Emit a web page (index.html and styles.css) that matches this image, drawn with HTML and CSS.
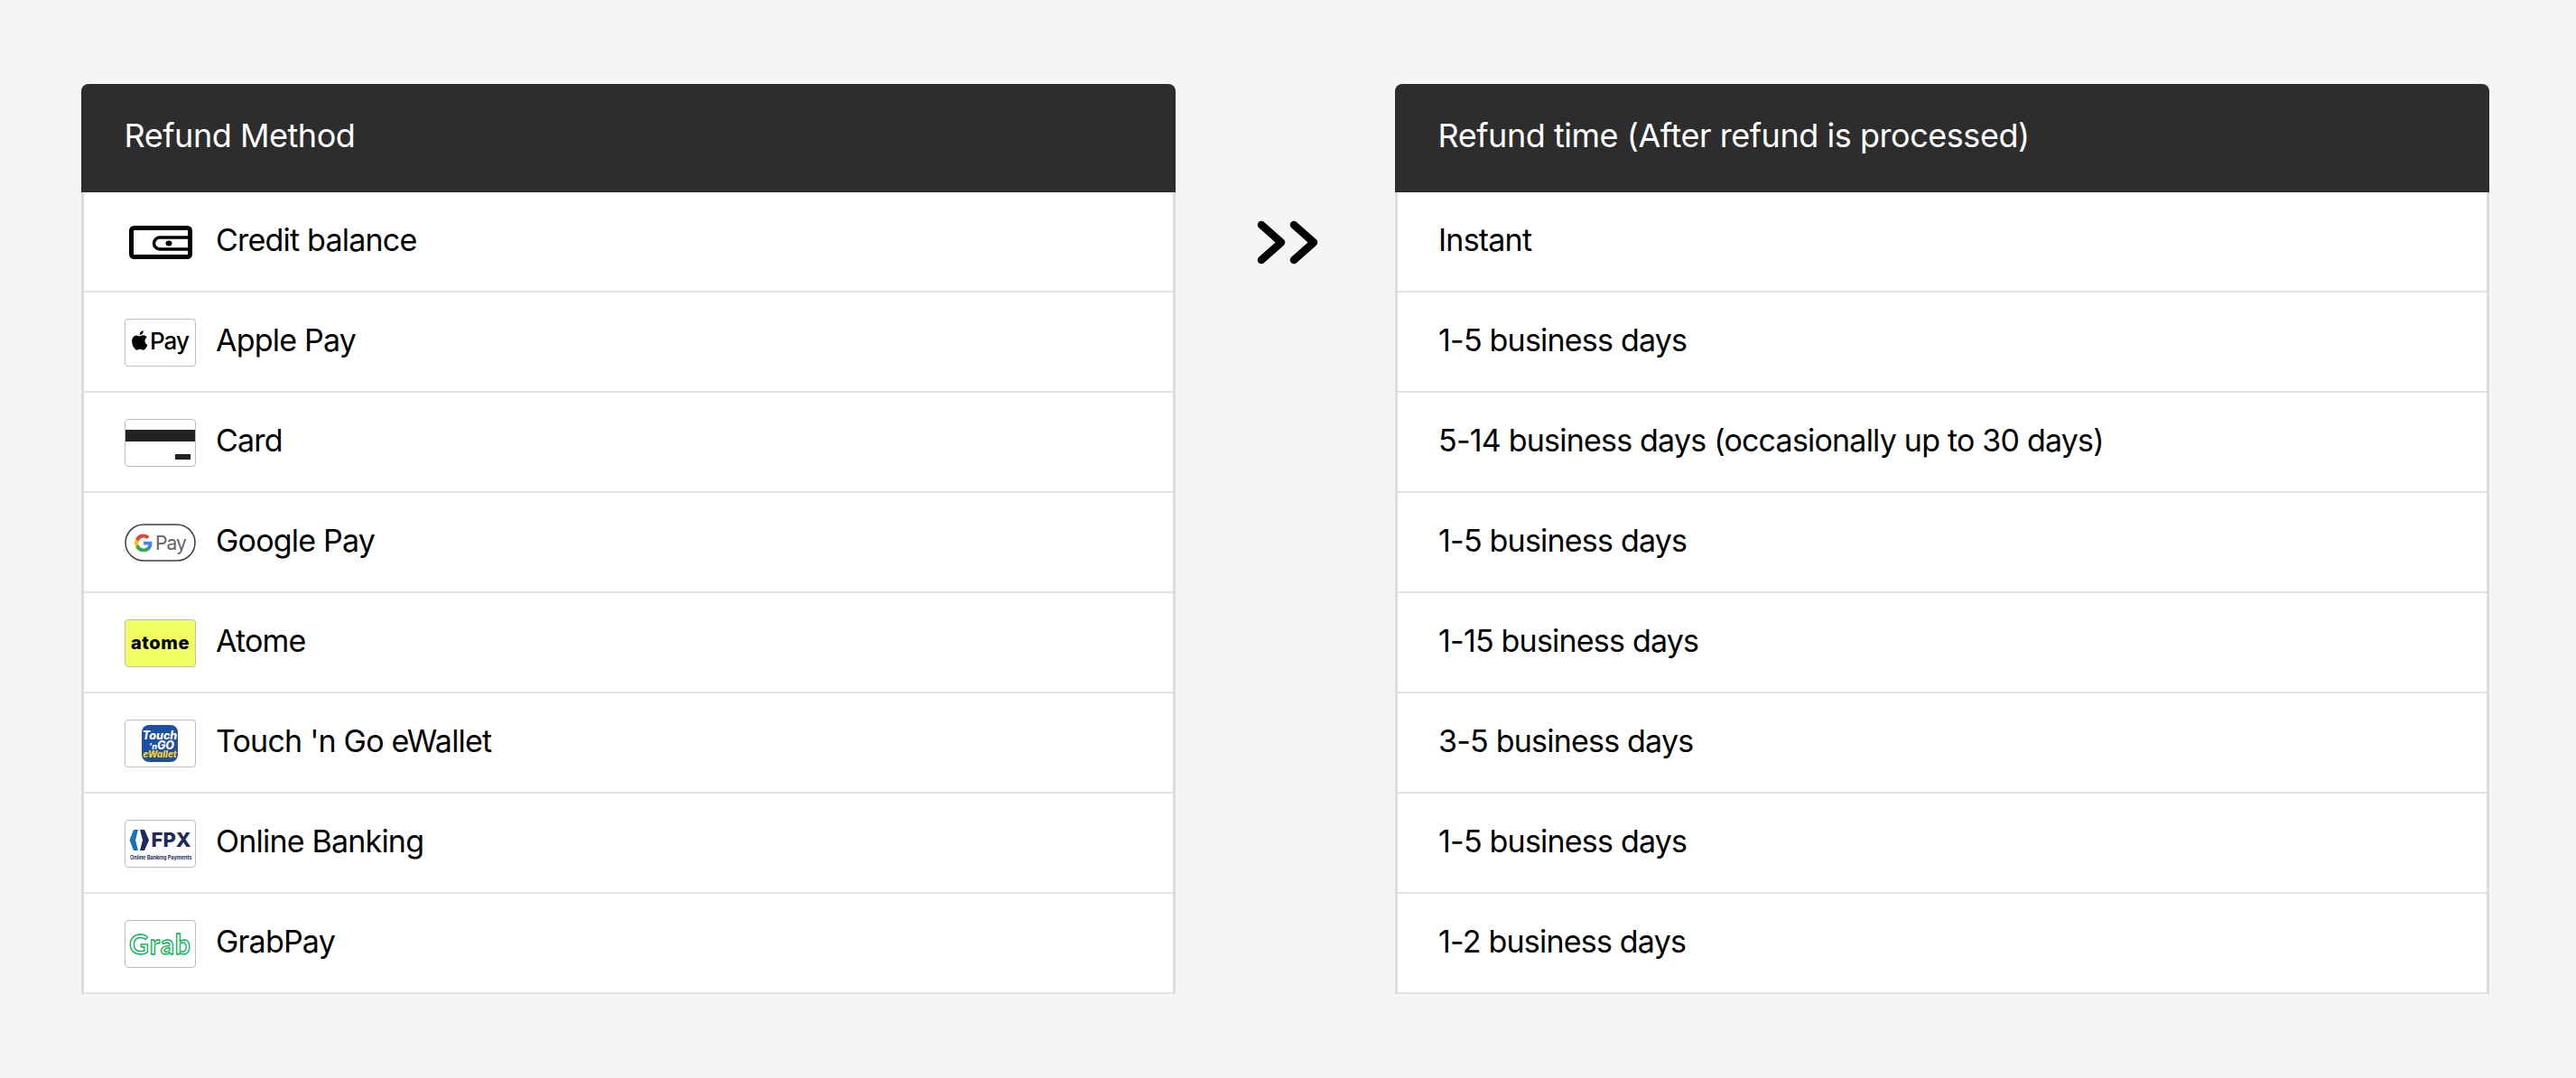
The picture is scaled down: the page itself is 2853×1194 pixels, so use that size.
FILE: index.html
```html
<!DOCTYPE html>
<html lang="en">
<head>
<meta charset="utf-8">
<title>Refund timelines</title>
<link rel="stylesheet" href="styles.css">
</head>
<body>
<main class="page">
  <section class="panel">
    <h2 class="panel-head">Refund Method</h2>
    <ul class="rows">
      <li class="row">
        <span class="logo">
          <svg width="79" height="53" viewBox="0 0 79 53"><rect x="7.500" y="10.500" width="65" height="32" rx="3" fill="none" stroke="#000" stroke-width="5"/><path d="M73 21H39a6.500 6.500 0 0 0 0 13H73" fill="none" stroke="#000" stroke-width="3.500"/><ellipse cx="49" cy="27.500" rx="3.500" ry="3" fill="#000"/></svg>
        </span>
        <span>Credit balance</span>
      </li>
      <li class="row">
        <span class="logo logo-box">
          <svg width="77" height="51" viewBox="0 0 77 51"><path transform="translate(0.700 0) scale(.92)" d="M22.600 25.600c0-3 2.400-4.300 2.500-4.400-1.400-2-3.500-2.300-4.200-2.300-1.800-.2-3.500 1.100-4.400 1.100s-2.300-1-3.800-1c-2 0-3.800 1.100-4.800 2.900-2 3.600-.5 8.800 1.500 11.700 1 1.400 2.100 3 3.600 3 1.500-.1 2-.9 3.800-.9s2.300.9 3.800.9c1.600 0 2.600-1.400 3.500-2.900 1.100-1.600 1.600-3.200 1.600-3.300-.1 0-3.100-1.200-3.100-4.800zM19.700 16.900c.8-1 1.300-2.300 1.200-3.700-1.200.1-2.600.8-3.400 1.800-.7.900-1.400 2.200-1.200 3.500 1.300.1 2.600-.6 3.400-1.600z" fill="#000"/><text class="t-apple" x="27" y="33">Pay</text></svg>
        </span>
        <span>Apple Pay</span>
      </li>
      <li class="row">
        <span class="logo logo-box logo-clip">
          <svg width="77" height="51" viewBox="0 0 77 51"><rect x="0" y="11" width="77" height="13" fill="#222"/><rect x="55" y="38" width="17" height="6" fill="#222"/></svg>
        </span>
        <span>Card</span>
      </li>
      <li class="row">
        <span class="logo">
          <svg width="79" height="53" viewBox="0 0 79 53"><rect x="1" y="6" width="77" height="40" rx="20" fill="#fff" stroke="#3c4043" stroke-width="1.500"/><path d="M30.500 26.700c0-.7-.1-1.400-.2-2H21v3.800h5.300a4.600 4.600 0 0 1-2 3v2.500h3.200c1.900-1.700 3-4.300 3-7.300z" fill="#4285f4"/><path d="M21 36.300c2.700 0 4.900-.9 6.500-2.400l-3.200-2.500c-.9.600-2 1-3.300 1-2.600 0-4.700-1.700-5.500-4.100h-3.300v2.600a9.700 9.700 0 0 0 8.800 5.400z" fill="#34a853"/><path d="M15.500 28.300a5.900 5.900 0 0 1 0-3.700V22h-3.300a9.800 9.800 0 0 0 0 8.900z" fill="#fbbc04"/><path d="M21 20.500c1.400 0 2.700.5 3.800 1.500l2.800-2.800A9.500 9.500 0 0 0 21 16.600 9.700 9.700 0 0 0 12.200 22l3.300 2.600c.8-2.400 2.900-4.100 5.500-4.100z" fill="#ea4335"/><text class="t-gpay" x="34" y="34">Pay</text></svg>
        </span>
        <span>Google Pay</span>
      </li>
      <li class="row">
        <span class="logo logo-box logo-atome">
          <svg width="77" height="51" viewBox="0 0 77 51"><text class="t-atome" x="38.500" y="32">atome</text></svg>
        </span>
        <span>Atome</span>
      </li>
      <li class="row">
        <span class="logo logo-box">
          <svg width="77" height="51" viewBox="0 0 77 51"><rect x="18" y="5" width="40" height="41" rx="8" fill="#1d50a2"/><text class="t-tng" x="38" y="20.500">Touch</text><text class="t-tng" x="40" y="31.500"><tspan class="t-tng-n">'n</tspan>GO</text><text class="t-tng t-tng-y" x="38" y="41">eWallet</text></svg>
        </span>
        <span>Touch 'n Go eWallet</span>
      </li>
      <li class="row">
        <span class="logo logo-box">
          <svg width="77" height="51" viewBox="0 0 77 51"><path d="M9 10h5l-3 11.500 3 11.500H9L4.500 21.500z" fill="#1572b9"/><path d="M16 10h5l5 11.500-5 11.500h-5l3-11.500z" fill="#1f2a5c"/><text class="t-fpx" x="28.500" y="29">FPX</text><text class="t-fpx-sub" x="5" y="42.500">Online Banking Payments</text></svg>
        </span>
        <span>Online Banking</span>
      </li>
      <li class="row">
        <span class="logo logo-box">
          <svg width="77" height="51" viewBox="0 0 77 51"><text class="t-grab" x="38.500" y="36.500">Grab</text></svg>
        </span>
        <span>GrabPay</span>
      </li>
    </ul>
  </section>

  <div class="arrow">
    <svg width="74" height="56" viewBox="0 0 74 56"><path d="M8 8l22 19.500L8 47M44 8l22 19.500L44 47" fill="none" stroke="#000" stroke-width="8.500" stroke-linecap="round" stroke-linejoin="round"/></svg>
  </div>

  <section class="panel">
    <h2 class="panel-head">Refund time (After refund is processed)</h2>
    <ul class="rows">
      <li class="row">Instant</li>
      <li class="row">1-5 business days</li>
      <li class="row">5-14 business days (occasionally up to 30 days)</li>
      <li class="row">1-5 business days</li>
      <li class="row">1-15 business days</li>
      <li class="row">3-5 business days</li>
      <li class="row">1-5 business days</li>
      <li class="row">1-2 business days</li>
    </ul>
  </section>
</main>
</body>
</html>
```

FILE: styles.css
```css
* { box-sizing: border-box; }
html, body { margin: 0; height: 100%; }
body {
  background: #f5f5f5;
  font-family: Inter, "Liberation Sans", sans-serif;
  color: #000;
}
.page {
  display: grid;
  grid-template-columns: 1212px 243px 1212px;
  padding: 93px 0 0 90px;
  align-items: start;
}
.panel-head {
  margin: 0;
  height: 120px;
  display: flex;
  align-items: center;
  padding: 0 47.500px 6px;
  background: #2d2d2d;
  border-radius: 8px 8px 0 0;
  color: #fff;
  font-size: 36px;
  font-weight: 400;
  letter-spacing: -0.46px;
}
.rows {
  list-style: none;
  margin: 0;
  padding: 0;
  background: #fff;
  border-left: 3px solid #dcdcdc;
  border-right: 3px solid #dcdcdc;
}
.row {
  display: flex;
  align-items: center;
  gap: 22px;
  height: 111px;
  padding: 0 45px 5px;
  border-bottom: 2px solid #e2e2e2;
  font-size: 34px;
  letter-spacing: -0.79px;
}
.logo {
  flex: none;
  width: 79px;
  height: 53px;
  margin-top: 7px;
  display: block;
}
.logo svg { display: block; }
.logo-box {
  border: 1px solid #bdbdbd;
  border-radius: 4px;
  background: #fff;
}
.logo-clip { overflow: hidden; }
.logo-atome { background: #f1fe63; }
.arrow {
  display: flex;
  justify-content: center;
  padding: 148px 0 0 4px;
}
.t-apple { font: 500 26px Inter, sans-serif; fill: #000; letter-spacing: -1px; }
.t-gpay { font: 400 21px Inter, sans-serif; fill: #5f6368; letter-spacing: -1px; }
.t-atome { font: 800 20px Inter, sans-serif; fill: #000; text-anchor: middle; letter-spacing: 0.6px; }
.t-tng { font: italic 800 12.500px Inter, sans-serif; fill: #fff; text-anchor: middle; letter-spacing: 0; }
.t-tng-n { font-size: 9px; }
.t-tng-y { font-size: 10px; fill: #fcd116; }
.t-fpx { font: 800 22px Inter, sans-serif; fill: #1f2a5c; letter-spacing: 0; }
.t-fpx-sub { font: 700 5.500px Inter, sans-serif; fill: #1f2a5c; letter-spacing: 0; }
.t-grab { font: 700 30px Lato, sans-serif; fill: #fff; stroke: #00b14f; stroke-width: 1.300px; text-anchor: middle; letter-spacing: 1px; }
```
